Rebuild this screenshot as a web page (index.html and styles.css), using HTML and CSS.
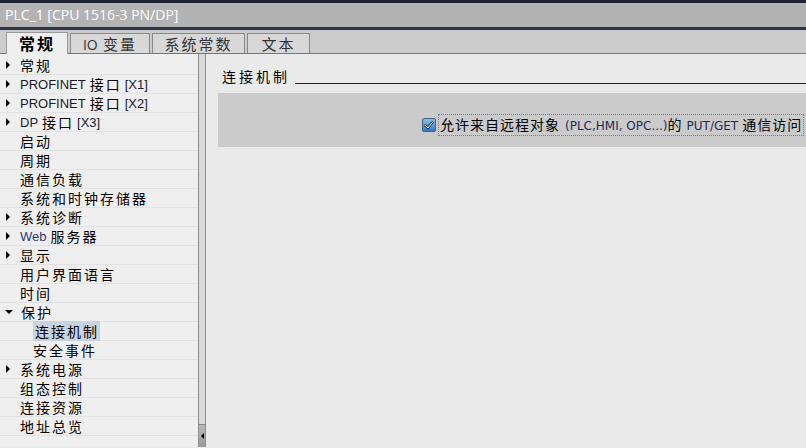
FILE: index.html
```html
<!DOCTYPE html>
<html>
<head>
  <title>PLC_1 属性</title>
  <link rel="stylesheet" href="styles.css">
</head>
<body>
  <div class="titlebar">PLC_1 [CPU 1516-3 PN/DP]</div>

  <div class="tabbar">
    <div class="tab active">常规</div>
    <div class="tab"><span class="latin">IO</span> 变量</div>
    <div class="tab">系统常数</div>
    <div class="tab">文本</div>
  </div>

  <div class="main">
    <ul class="tree">
      <li class="node"><span class="arrow"></span>常规</li>
      <li class="node"><span class="arrow"></span><span class="latin">PROFINET</span>接口<span class="latin tail">[X1]</span></li>
      <li class="node"><span class="arrow"></span><span class="latin">PROFINET</span>接口<span class="latin tail">[X2]</span></li>
      <li class="node"><span class="arrow"></span><span class="latin">DP</span>接口<span class="latin tail">[X3]</span></li>
      <li class="node leaf">启动</li>
      <li class="node leaf">周期</li>
      <li class="node leaf">通信负载</li>
      <li class="node leaf">系统和时钟存储器</li>
      <li class="node"><span class="arrow"></span>系统诊断</li>
      <li class="node"><span class="arrow"></span><span class="latin web">Web</span>服务器</li>
      <li class="node"><span class="arrow"></span>显示</li>
      <li class="node leaf">用户界面语言</li>
      <li class="node leaf">时间</li>
      <li class="node"><span class="arrow open"></span>保护</li>
      <li class="node child"><span class="selected">连接机制</span></li>
      <li class="node child">安全事件</li>
      <li class="node"><span class="arrow"></span>系统电源</li>
      <li class="node leaf">组态控制</li>
      <li class="node leaf">连接资源</li>
      <li class="node leaf">地址总览</li>
    </ul>

    <div class="scrollbar">
      <div class="track"></div>
      <div class="thumb"><span class="thumb-arrow"></span></div>
    </div>

    <div class="content">
      <div class="section-title">
        <span>连接机制</span>
        <div class="rule"></div>
      </div>
      <div class="section-box">
        <label class="check">
          <span class="checkbox">
            <svg width="14" height="14" viewBox="0 0 14 14">
              <defs>
                <linearGradient id="cbg" x1="0" y1="0" x2="0" y2="1">
                  <stop offset="0" stop-color="#8cc0ec"/>
                  <stop offset="1" stop-color="#2f78c4"/>
                </linearGradient>
              </defs>
              <rect x="0.5" y="0.5" width="13" height="13" rx="1.5" fill="url(#cbg)" stroke="#4a5f78"/>
              <path d="M3 7 L6 10 L11 3.5" fill="none" stroke="#0e2a55" stroke-width="2.4"/>
              <path d="M3 7 L6 10 L11 3.5" fill="none" stroke="#ffffff" stroke-width="1"/>
            </svg>
          </span>
          <span class="check-text">允许来自远程对象<span class="latin paren">(PLC,HMI, OPC...)</span>的<span class="latin get">PUT/GET</span>通信访问</span>
        </label>
      </div>
    </div>
  </div>
</body>
</html>
```

FILE: styles.css
```css
body {
  margin: 0;
  padding: 0;
  width: 806px;
  height: 448px;
  overflow: hidden;
  background-color: #eaeaea;
  font-family: "Noto Sans CJK SC", "DejaVu Sans", sans-serif;
  font-size: 14px;
  color: #000;
}

.latin {
  font-family: "Liberation Sans", Arial, sans-serif;
  font-size: 13px;
  color: #1a1a2e;
}

.titlebar {
  height: 24px;
  line-height: 24px;
  border-top: 3px solid #1e2233;
  border-bottom: 3px solid #2e3449;
  background-color: #b3b3b3;
  color: #fff;
  padding-left: 5px;
  font-family: "Open Sans", "DejaVu Sans", sans-serif;
  font-size: 14px;
}

.tabbar {
  display: flex;
  align-items: flex-end;
  height: 23px;
  padding-left: 6px;
  gap: 2px;
  background-color: #cccccc;
  border-bottom: 1px solid #777;
}

.tab {
  box-sizing: border-box;
  height: 20px;
  line-height: 19px;
  border: 1px solid #8a8a8a;
  border-bottom: none;
  background-color: #d8d8d8;
  color: #333;
  font-size: 15px;
  letter-spacing: 2px;
  text-align: center;
  white-space: nowrap;
}

.tab .latin {
  font-family: "Open Sans", "DejaVu Sans", sans-serif;
  font-size: 14px;
  color: #333;
  letter-spacing: 0;
}

.tab:nth-child(1) { width: 62px; }
.tab:nth-child(2) { width: 80px; }
.tab:nth-child(3) { width: 93px; }
.tab:nth-child(4) { width: 63px; }

.tab.active {
  height: 22px;
  line-height: 21px;
  margin-bottom: -1px;
  background-color: #efefef;
  color: #000;
  font-weight: bold;
  font-size: 16px;
  border-color: #999;
}

.main {
  display: flex;
  height: 393px;
}

.tree {
  list-style: none;
  margin: 0;
  padding: 2px 0 0 0;
  width: 198px;
  background-color: #efefef;
}

.node {
  display: flex;
  align-items: center;
  height: 18px;
  border-bottom: 1px solid #e2e2e2;
  padding-left: 6px;
  white-space: nowrap;
  letter-spacing: 2px;
}

.node .latin {
  letter-spacing: 0;
  margin-right: 4px;
}

.node .latin.tail {
  margin-left: 3px;
}

.node .web {
  color: #2a3a7a;
}

.node.leaf {
  padding-left: 20px;
}

.node.child {
  padding-left: 33px;
}

.arrow {
  width: 0;
  height: 0;
  border-top: 4px solid transparent;
  border-bottom: 4px solid transparent;
  border-left: 4px solid #000;
  margin-right: 10px;
}

.arrow.open {
  border-left: 4px solid transparent;
  border-right: 4px solid transparent;
  border-top: 4px solid #000;
  border-bottom: none;
  margin-left: -1px;
  margin-right: 8px;
}

.selected {
  background-color: #c7d3e0;
  padding: 0 1px 0 2px;
}

.scrollbar {
  display: flex;
  flex-direction: column;
  width: 6px;
  border-left: 1px solid #8c8c8c;
  border-right: 1px solid #8c8c8c;
  background-color: #d9d9d9;
  margin-right: 12px;
}

.track {
  flex: 1;
}

.thumb {
  height: 22px;
  display: flex;
  align-items: center;
  justify-content: center;
  background: linear-gradient(#b8b8b8, #9a9a9a);
  border-top: 1px solid #888;
}

.thumb-arrow {
  width: 0;
  height: 0;
  border-top: 3px solid transparent;
  border-bottom: 3px solid transparent;
  border-right: 3px solid #000;
}

.content {
  flex: 1;
  padding-top: 12px;
  overflow: hidden;
}

.section-title {
  display: flex;
  align-items: center;
  height: 20px;
  padding-left: 4px;
  letter-spacing: 3px;
}

.rule {
  flex: 1;
  height: 1px;
  margin-left: 5px;
  margin-top: 14px;
  background-color: #222;
}

.section-box {
  display: flex;
  align-items: center;
  height: 54px;
  margin-top: 7px;
  padding: 10px 0 0 204px;
  box-sizing: border-box;
  background-color: #cbcbcb;
  overflow: hidden;
}

.check {
  display: flex;
  align-items: center;
  white-space: nowrap;
}

.checkbox {
  display: flex;
  margin-right: 2px;
}

.check-text {
  border: 1px dotted #6d7a99;
  padding: 0 1px;
  letter-spacing: 1px;
  line-height: 18px;
}

.check-text .latin {
  font-family: "DejaVu Sans", sans-serif;
  font-size: 12px;
  letter-spacing: 0;
  color: #1e2a5a;
}

.check-text .paren {
  margin-left: 5px;
}

.check-text .get {
  margin: 0 4px 0 4px;
}
```
